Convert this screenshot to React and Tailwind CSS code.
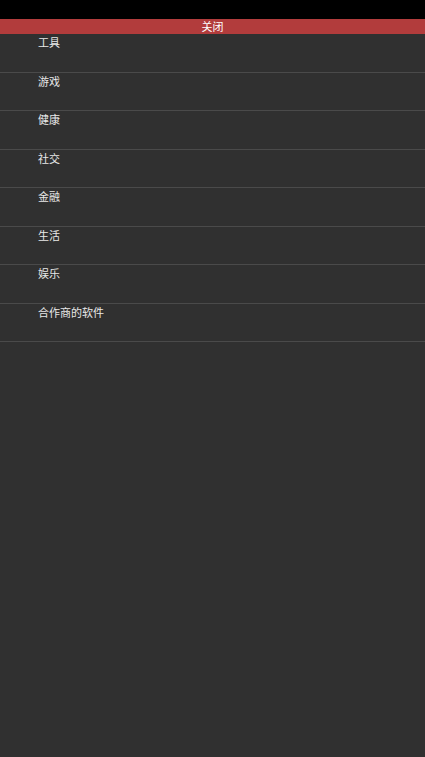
export default function App() {
  const items = ["工具", "游戏", "健康", "社交", "金融", "生活", "娱乐", "合作商的软件"];
  return (
    <div
      className="w-[425px] h-[757px] bg-[#303030] flex flex-col"
      style={{ fontFamily: '"Noto Sans", "Noto Sans CJK SC", sans-serif' }}
    >
      <div className="h-[19px] bg-black shrink-0" />
      <div className="h-[15px] bg-[#b23c3c] text-white text-[11px] leading-[16px] text-center shrink-0">关闭</div>
      <div className="flex flex-col">
        {items.map((t) => (
          <div key={t} className="h-[38.5px] border-b border-[#4a4a4a] pl-[38px] text-[11px] leading-[17px] text-[#e8e8e8]">
            {t}
          </div>
        ))}
      </div>
    </div>
  );
}
